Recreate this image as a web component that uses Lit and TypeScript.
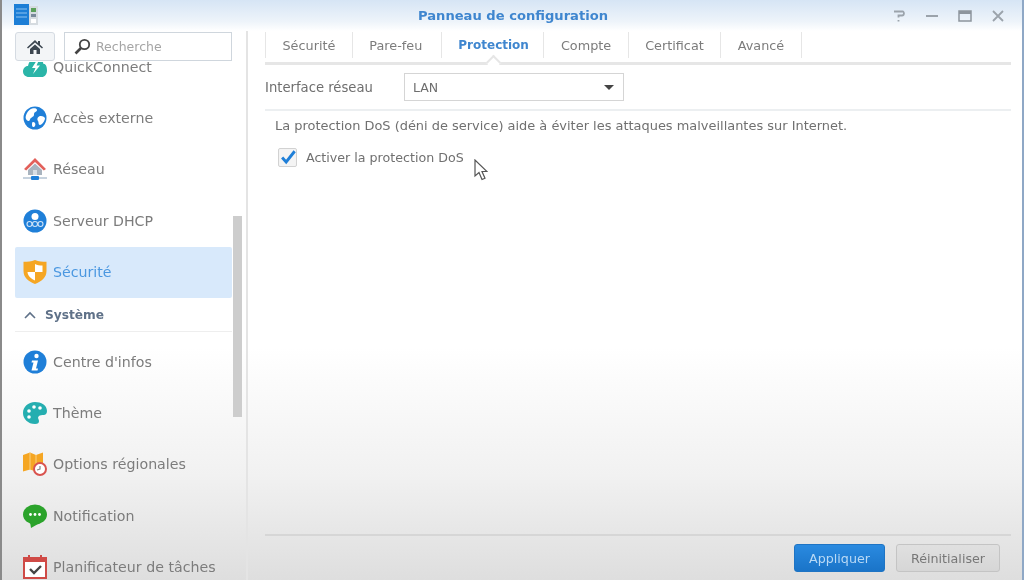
import { LitElement, html, css, svg } from "lit";
import { customElement } from "lit/decorators.js";

const icons: Record<string, unknown> = {
  quick: svg`<path d="M6 22c-3.500 0-6-2.500-6-5.500S2 11 5 11c1-5 4-8 8-8 4.500 0 7 3 7.500 6 2-.500 3.500 2 3.500 6.500 0 4-2.500 6.500-5 6.500z" fill="#2bb5a8"/><path d="M14 5l-5 8h3.500L10 19l7-8.500h-3.500L16 5z" fill="#fff"/>`,
  globe: svg`<circle cx="12" cy="12" r="11.500" fill="#1f7fd8"/><path d="M7 3.500c3-2 7-1.500 7 .5s-3 1.500-3 4.500-3 2-4 5-3.500 1-4.200-1S4 5.500 7 3.500zM16 10.500c2-1 6 0 6 2s-3 6.500-5 6.500-1-3-2-4-1-3.500 1-4.500zM10 16c2 0 3 2 2 4s-3 1-3-1 0-3 1-3z" fill="#fff"/>`,
  net: svg`<path d="M12 1L1 12l2.200 1.500L12 5l8.800 8.500L23 12z" fill="#e2605a"/><path d="M5 13l7-6.500 7 6.500v5H5z" fill="#a9b4bf"/><rect x="10" y="13" width="4" height="5" fill="#d8dee4"/><path d="M0 21h24" stroke="#8fa6bd" stroke-width="1"/><rect x="8" y="19" width="8" height="4" rx="1" fill="#1f7fd8"/>`,
  dhcp: svg`<circle cx="12" cy="12" r="11.500" fill="#1f7fd8"/><circle cx="12" cy="7.500" r="3.500" fill="#fff"/><g fill="none" stroke="#cfe4f8" stroke-width="1.100"><circle cx="6.500" cy="15" r="2.500"/><circle cx="12" cy="15" r="2.500"/><circle cx="17.500" cy="15" r="2.500"/></g>`,
  shield: svg`<path d="M12 0c4 1.500 7 1.800 11.500 1.800V11c0 6.500-5 10.500-11.500 13C5.500 21.500.5 17.500.5 11V1.800C5 1.800 8 1.500 12 0z" fill="#f5a623"/><path d="M12 4c2 1 4.500 1.500 7.500 1.500V12H12zM4.500 12H12v8.500c-4-2-7.200-4.500-7.500-8.500z" fill="#fff"/>`,
  info: svg`<circle cx="12" cy="12" r="11.500" fill="#1f7fd8"/><circle cx="13.500" cy="6" r="2.200" fill="#fff"/><path d="M9 10.500h6l-2 8h2l-.5 2H8.500l2-8H8.500z" fill="#fff"/>`,
  theme: svg`<path d="M12 1C5 1 0 6 0 12s5 11 12 11c3 0 4-1 4-3s-2-3 0-5 8 1 8-5S18 1 12 1z" fill="#25aeb0"/><g fill="#fff"><circle cx="6" cy="10" r="1.800"/><circle cx="11" cy="6" r="1.800"/><circle cx="17" cy="7" r="1.800"/><circle cx="6" cy="16" r="1.800"/></g>`,
  region: svg`<path d="M0 3l7-2.500 6 2.500 7-2.500v11l-7 8-6-2-7 2z" fill="#f5a623"/><path d="M7 .5v17M13 3v15" stroke="#fbd080" stroke-width="1"/><circle cx="17" cy="17" r="6" fill="#fff" stroke="#d9534f" stroke-width="2"/><path d="M17 14v3l-3 1" fill="none" stroke="#888" stroke-width="1.200"/>`,
  notif: svg`<ellipse cx="12" cy="10.500" rx="12" ry="10" fill="#2ba32b"/><path d="M7 18l1 6 7-4z" fill="#2ba32b"/><g fill="#fff"><circle cx="7.500" cy="10.500" r="1.400"/><circle cx="12" cy="10.500" r="1.400"/><circle cx="16.500" cy="10.500" r="1.400"/></g>`,
  sched: svg`<rect x="1" y="3" width="22" height="20" fill="#fff" stroke="#cf4a46" stroke-width="2"/><rect x="1" y="3" width="22" height="4" fill="#cf4a46"/><path d="M6 0v4M18 0v4" stroke="#cf4a46" stroke-width="2"/><path d="M7 14l4 4 7-7" fill="none" stroke="#444" stroke-width="2.400"/>`,
};

@customElement("app-root")
export class AppRoot extends LitElement {
  static styles = css`
    :host { display: block; width: 1024px; height: 580px; overflow: hidden; background: #fff; }
    * { box-sizing: border-box; }
    .window {
      position: relative; width: 1024px; height: 580px; display: flex; flex-direction: column; overflow: hidden;
      font-family: "DejaVu Sans", sans-serif; font-size: 14.200px; color: #666;
      background: linear-gradient(#fff 0, #fff 60%, #f1f1f1 82%, #dedede 100%);
      border-left: 2px solid #8a8a8a; border-right: 2px solid #8fa8c6; filter: blur(0.6px);
    }
    .title {
      height: 31px; flex: none; display: flex; align-items: center; position: relative; padding-left: 12px;
      background: linear-gradient(#d6e5f5, #eef4fa 70%, #fff);
    }
    .logo { width: 25px; height: 21px; display: block; margin-top: -2px; }
    .title h1 { position: absolute; left: 2px; right: 0; top: 8px; margin: 0; text-align: center; font-size: 13.100px; font-weight: 700; color: #3f86cf; line-height: 16px; }
    .controls { margin-left: auto; display: flex; gap: 17px; padding-right: 16px; }
    .controls svg { width: 16px; height: 16px; display: block; }
    .body { flex: 1; display: flex; min-height: 0; }
    .side { width: 246px; flex: none; border-right: 2px solid #e4e4e4; display: flex; flex-direction: column; position: relative; }
    .tools { height: 31px; flex: none; display: flex; gap: 9px; padding: 1px 0 0 13px; position: relative; background: #fff; z-index: 1; }
    .home { width: 40px; height: 29px; border: 1px solid #d5dbe2; border-radius: 3px; background: #f3f5f7; display: flex; align-items: center; justify-content: center; }
    .home svg { width: 16px; height: 16px; }
    .search { width: 168px; height: 29px; border: 1px solid #cfd6dd; background: #fff; display: flex; align-items: center; gap: 5px; padding-left: 9px; color: #a5a5a5; font-size: 12.500px; }
    .search svg { width: 17px; height: 17px; flex: none; }
    .list { flex: 1; overflow: hidden; padding: 0 14px 0 13px; }
    .scroller { margin-top: -21px; }
    .item { height: 51.400px; display: flex; align-items: center; gap: 6px; padding-left: 8px; color: #7c7c7c; border-radius: 2px; }
    .item svg { width: 24px; height: 24px; flex: none; }
    .item.on { background: #d8e9fb; color: #4a97e0; }
    .group { height: 34px; display: flex; align-items: center; gap: 8px; padding: 2px 0 0 8px; font-size: 12.200px; font-weight: 700; color: #5f7188; border-bottom: 1px solid #eee; margin-bottom: 4px; }
    .group svg { width: 14px; height: 14px; }
    .bar { position: absolute; left: 231px; top: 185px; width: 9px; height: 201px; background: #cdcdcd; }
    .main { flex: 1; display: flex; flex-direction: column; padding: 0 9px 0 17px; min-width: 0; }
    .tabs { height: 34px; flex: none; display: flex; border-bottom: 3px solid #e6e6e6; position: relative; margin-right: 2px; }
    .tab { height: 26px; display: flex; align-items: center; padding: 0 16.500px; border-right: 1px solid #e6e6e6; color: #7c7c7c; font-size: 12.800px; margin-top: 1px; }
    .tab:first-child { border-left: 1px solid #e6e6e6; }
    .tab:nth-child(2) { padding-right: 18.500px; }
    .tab.on { color: #3f86cf; font-weight: 700; position: relative; font-size: 12px; padding-right: 14.500px; }
    .tab.on::after { content: ""; position: absolute; left: 50%; bottom: -10px; width: 9px; height: 9px; margin-left: -5px; background: #fff; border-left: 2px solid #e6e6e6; border-top: 2px solid #e6e6e6; transform: rotate(45deg); }
    .row { height: 46px; flex: none; display: flex; align-items: center; border-bottom: 2px solid #eceff1; margin-right: 2px; }
    .row label { width: 139px; color: #6e6e6e; font-size: 13.200px; }
    .select { width: 220px; height: 28px; border: 1px solid #d5d5d5; display: flex; align-items: center; justify-content: space-between; padding: 0 9px 0 8px; font-size: 12.500px; color: #6e6e6e; background: #fff; }
    .caret { width: 0; height: 0; border: 5px solid transparent; border-top: 5px solid #444; border-bottom: 0; }
    .content { flex: 1; padding: 6px 0 0 10px; min-height: 0; }
    .content p { margin: 0; line-height: 18px; font-size: 12.940px; color: #707070; }
    .check { display: flex; align-items: center; gap: 9px; margin: 13px 0 0 3px; font-size: 12.650px; color: #707070; }
    .box { width: 19px; height: 19px; border: 1px solid #d2d2d2; border-radius: 2px; background: #f4f4f4; display: block; overflow: visible; }
    .foot { height: 46px; flex: none; border-top: 2px solid #d6d6d6; display: flex; justify-content: flex-end; gap: 11px; padding: 8px 11px 0 0; margin-right: 2px; }
    .btn { height: 28px; border-radius: 3px; display: flex; align-items: center; justify-content: center; font-size: 12.700px; }
    .btn.primary { width: 91px; background: linear-gradient(#2a8ae0, #1a74c8); border: 1px solid #1e74c4; color: #b9d9f5; }
    .btn.second { width: 104px; background: linear-gradient(#e0e0e0, #d6d6d6); border: 1px solid #c4c4c4; color: #777; }
    .cursor { position: absolute; left: 472px; top: 159px; width: 14px; height: 22px; }
  `;

  private item(icon: string, label: string, on = false) {
    return html`<div class="item ${on ? "on" : ""}"><svg viewBox="0 0 24 24">${icons[icon]}</svg><span>${label}</span></div>`;
  }

  render() {
    const tabs = ["Sécurité", "Pare-feu", "Protection", "Compte", "Certificat", "Avancé"];
    return html`<div class="window">
      <header class="title">
        <svg class="logo" viewBox="0 0 25 21">
          <rect width="15" height="21" fill="#1c7ed6"/><path d="M2 5h11M2 9h11M2 13h11" stroke="#8cc2f0" stroke-width="1"/>
          <rect x="15" y="2" width="9" height="19" fill="#d5dbe0"/><rect x="17" y="4" width="5" height="4" fill="#5aa05a"/><rect x="17" y="10" width="5" height="3" fill="#7a8a9a"/><rect x="17" y="15" width="5" height="4" fill="#fff"/>
        </svg>
        <h1>Panneau de configuration</h1>
        <div class="controls">
          <svg viewBox="0 0 16 16"><path d="M3 3.500h8.500c2 0 2 4-.5 4H7.500v2M7.500 12v1.500" fill="none" stroke="#9ba3ab" stroke-width="1.800"/></svg>
          <svg viewBox="0 0 16 16"><path d="M2 8h12" stroke="#9ba3ab" stroke-width="2"/></svg>
          <svg viewBox="0 0 16 16"><rect x="2" y="3" width="12" height="10" fill="none" stroke="#8d959d" stroke-width="1.500"/><rect x="2" y="3" width="12" height="3" fill="#8d959d"/></svg>
          <svg viewBox="0 0 16 16"><path d="M3 3l10 10M13 3L3 13" stroke="#9ba3ab" stroke-width="1.800"/></svg>
        </div>
      </header>
      <div class="body">
        <aside class="side">
          <div class="tools">
            <div class="home"><svg viewBox="0 0 16 16"><path d="M8 1L0 8.500l1 1L8 3.500l7 6 1-1-3-2.800V2h-2v2zM3 10l5-4.500 5 4.500v5H9.500v-4h-3v4H3z" fill="#3c4650"/></svg></div>
            <div class="search"><svg viewBox="0 0 17 17"><circle cx="10.500" cy="6.500" r="4.700" fill="none" stroke="#444" stroke-width="1.800"/><path d="M7 10l-5.500 5.500" stroke="#444" stroke-width="2.600"/></svg><span>Recherche</span></div>
          </div>
          <div class="list"><div class="scroller">
            ${this.item("quick", "QuickConnect")}
            ${this.item("globe", "Accès externe")}
            ${this.item("net", "Réseau")}
            ${this.item("dhcp", "Serveur DHCP")}
            ${this.item("shield", "Sécurité", true)}
            <div class="group"><svg viewBox="0 0 14 14"><path d="M2 10l5-5 5 5" fill="none" stroke="#5f7188" stroke-width="1.600"/></svg><span>Système</span></div>
            ${this.item("info", "Centre d'infos")}
            ${this.item("theme", "Thème")}
            ${this.item("region", "Options régionales")}
            ${this.item("notif", "Notification")}
            ${this.item("sched", "Planificateur de tâches")}
          </div></div>
          <div class="bar"></div>
        </aside>
        <main class="main">
          <nav class="tabs">${tabs.map((t) => html`<div class="tab ${t === "Protection" ? "on" : ""}">${t}</div>`)}</nav>
          <div class="row"><label>Interface réseau</label><div class="select"><span>LAN</span><span class="caret"></span></div></div>
          <div class="content">
            <p>La protection DoS (déni de service) aide à éviter les attaques malveillantes sur Internet.</p>
            <div class="check">
              <svg class="box" viewBox="0 0 19 19"><path d="M3.500 9.500l4.500 5L17.500 2.500" fill="none" stroke="#1f7fd8" stroke-width="3.200"/></svg>
              <span>Activer la protection DoS</span>
            </div>
          </div>
          <footer class="foot"><div class="btn primary">Appliquer</div><div class="btn second">Réinitialiser</div></footer>
        </main>
      </div>
      <svg class="cursor" viewBox="0 0 14 22"><path d="M1 1v16l4-3.500 3 7 3-1.300-3-6.700h5z" fill="#fff" stroke="#555" stroke-width="1.200"/></svg>
    </div>`;
  }
}
